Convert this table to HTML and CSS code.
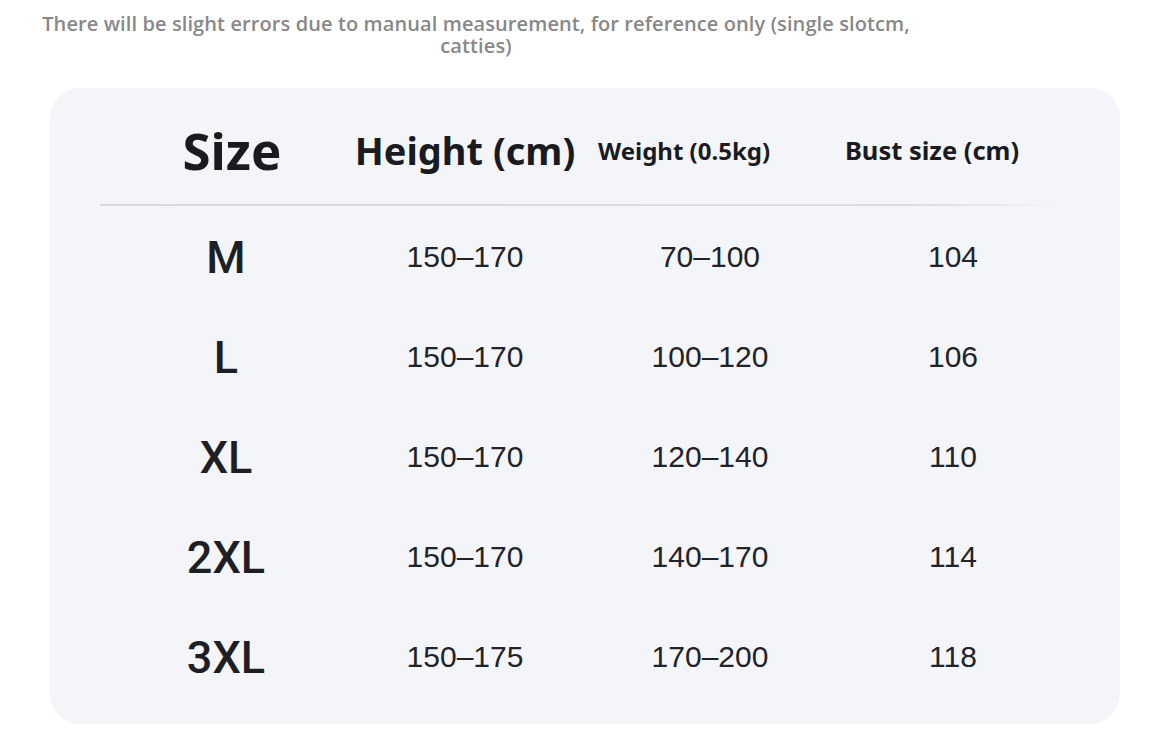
FILE: index.html
```html
<!DOCTYPE html>
<html>
<head>
<meta charset="utf-8">
<link rel="stylesheet" href="styles.css">
</head>
<body>
<p class="note">There will be slight errors due to manual measurement, for reference only (single slotcm, catties)</p>
<div class="card">
  <div class="row head">
    <div class="cell h-size">Size</div>
    <div class="cell h-height">Height (cm)</div>
    <div class="cell h-weight">Weight (0.5kg)</div>
    <div class="cell h-bust">Bust size (cm)</div>
  </div>
  <div class="divider"></div>
  <div class="row">
    <div class="cell size">M</div><div class="cell val">150–170</div><div class="cell val">70–100</div><div class="cell val">104</div>
  </div>
  <div class="row">
    <div class="cell size">L</div><div class="cell val">150–170</div><div class="cell val">100–120</div><div class="cell val">106</div>
  </div>
  <div class="row">
    <div class="cell size">XL</div><div class="cell val">150–170</div><div class="cell val">120–140</div><div class="cell val">110</div>
  </div>
  <div class="row">
    <div class="cell size">2XL</div><div class="cell val">150–170</div><div class="cell val">140–170</div><div class="cell val">114</div>
  </div>
  <div class="row">
    <div class="cell size">3XL</div><div class="cell val">150–175</div><div class="cell val">170–200</div><div class="cell val">118</div>
  </div>
</div>
</body>
</html>
```
FILE: styles.css
```css
html, body {
  margin: 0;
  padding: 0;
  background: #ffffff;
}
body {
  width: 1170px;
  height: 745px;
  overflow: hidden;
}
.note {
  margin: 0 0 0 36px;
  padding-top: 13px;
  width: 880px;
  text-align: center;
  font-family: "Open Sans", sans-serif;
  font-weight: 600;
  font-size: 20px;
  line-height: 22px;
  letter-spacing: 0.1px;
  color: #888888;
}
.card {
  margin: 31px 0 0 50px;
  width: 1070px;
  height: 636px;
  box-sizing: border-box;
  padding: 0 56px 18px 50px;
  background: #f4f5f9;
  border-radius: 30px;
}
.row {
  display: grid;
  grid-template-columns: 252px 226px 264px 222px;
  height: 100px;
  align-items: center;
}
.row.head {
  height: 108px;
  padding-top: 8px;
}
.cell {
  text-align: center;
  color: #1e1f24;
  white-space: nowrap;
}
.divider {
  height: 2px;
  width: 960px;
  background: linear-gradient(to right, #d9dadf 0%, #dcdde2 85%, rgba(220,221,226,0) 100%);
  margin-bottom: 1px;
}
.h-size, .h-height, .h-weight, .h-bust {
  font-family: "Noto Sans", sans-serif;
  font-weight: 700;
  color: #1a1b20;
}
.h-size {
  font-size: 51px;
  padding-left: 12px;
}
.h-height {
  font-size: 38px;
  padding-left: 0;
}
.h-weight {
  font-size: 24px;
  padding-right: 52px;
}
.h-bust {
  font-size: 25.5px;
  padding-right: 42px;
}
.size {
  font-family: Roboto, sans-serif;
  font-weight: 500;
  font-size: 45px;
}
.val {
  font-family: "Liberation Sans", sans-serif;
  font-size: 30px;
  color: #222328;
}
```
